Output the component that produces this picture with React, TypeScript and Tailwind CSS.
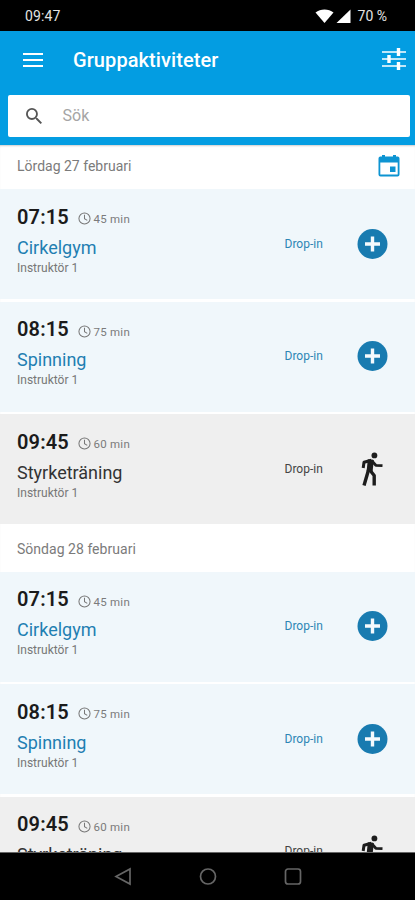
import React from "react";

type Activity = { time: string; length: string; name: string; walk?: boolean };

const activities: Activity[] = [
  { time: "07:15", length: "45 min", name: "Cirkelgym" },
  { time: "08:15", length: "75 min", name: "Spinning" },
  { time: "09:45", length: "60 min", name: "Styrketräning", walk: true },
];

function Plus() {
  return (
    <svg viewBox="0 0 36 36" className="size-9">
      <circle cx="18.5" cy="18" r="15" fill="#187bb0" />
      <path d="M18.5 10.5v15M11 18h15" stroke="#f4fafd" strokeWidth="3.4" />
    </svg>
  );
}

function Walk() {
  return (
    <svg viewBox="0 0 22 34" className="mt-[1.5px] h-[34px] w-[22px]" fill="none" stroke="#1d1d1d" strokeLinejoin="round">
      <circle cx="13.4" cy="3.4" r="2.9" fill="#1d1d1d" stroke="none" />
      <path d="M9.8 7.600L8.600 19.500" strokeWidth="6" />
      <path d="M10.500 8.300L3 10.300L2.200 16" strokeWidth="3" />
      <path d="M10.500 8.500L14.800 13.300L21.500 13.600" strokeWidth="2.800" />
      <path d="M7.800 17L3 33.500" strokeWidth="3.400" />
      <path d="M8.800 18L13.200 23.500V33.500" strokeWidth="3.400" />
    </svg>
  );
}

function Row({ a }: { a: Activity }) {
  return (
    <div className={`flex h-[110.25px] shrink-0 pl-[17px] ${a.walk ? "bg-[#efefef]" : "bg-[#f0f7fb]"}`}>
      <div className="w-[267.5px] pt-[15.75px]">
        <div className="flex h-6 items-center">
          <span className="w-[61px] text-[20px] leading-6 font-semibold tracking-[0.15px] text-[#1b1b1b]">{a.time}</span>
          <svg viewBox="0 0 14 14" className="mt-[4px] size-[13px]" fill="none" stroke="#777" strokeWidth="1.1">
            <circle cx="7" cy="7" r="6" />
            <path d="M7 3v4.2l3 1.8" />
          </svg>
          <span className="mt-[5px] ml-[2.5px] text-[11.5px] leading-4 tracking-[0.25px] text-[#7b7b7b]">{a.length}</span>
        </div>
        <div className={`mt-[6.75px] text-[18px] leading-6 ${a.walk ? "text-[#333]" : "text-[#1f7fb2]"}`}>{a.name}</div>
        <div className="text-[12px] leading-4 text-[#777]">Instruktör 1</div>
      </div>
      <div className={`w-[69.5px] pt-[46.75px] text-[12px] leading-4 ${a.walk ? "text-[#444]" : "text-[#2d86b5]"}`}>Drop-in</div>
      <div className="flex w-9 justify-center pt-[36.75px]">{a.walk ? <Walk /> : <Plus />}</div>
    </div>
  );
}

function Rows() {
  return (
    <div className="flex flex-col gap-[2.25px]">
      {activities.map((a) => (
        <Row key={a.time} a={a} />
      ))}
    </div>
  );
}

export default function App() {
  return (
    <div className="flex h-[900px] w-[415px] flex-col overflow-hidden bg-white font-['Roboto',sans-serif]">
      <div className="flex h-[31px] shrink-0 items-center bg-black pr-[28px] pl-[25px] text-[14px] text-[#e4e4e4]">
        <span className="flex-1 pt-px tracking-[0.15px]">09:47</span>
        <svg viewBox="0 0 36 16" className="mt-px mr-[7px] h-4 w-9" fill="#fff">
          <path d="M0.5 4.5C5.5 0.5 13.500 0.500 18.500 4.500L9.500 15z" />
          <path d="M35.500 1.500V15H21.500z" />
        </svg>
        <span className="pt-px">70 %</span>
      </div>
      <header className="h-[113.500px] shrink-0 bg-[#039de2]">
        <div className="flex h-[64px] items-center pl-[23px]">
          <svg viewBox="0 0 20 14" className="mt-[-6px] h-[14px] w-5" stroke="#fff" strokeWidth="2">
            <path d="M0 1h20M0 7h20M0 13h20" />
          </svg>
          <h1 className="mt-[-6px] ml-[30px] flex-1 text-[20px] font-medium tracking-[0.08px] text-white">Gruppaktiviteter</h1>
          <svg viewBox="0 0 24 24" className="mt-[-8px] mr-[9px] size-6" stroke="#fff">
            <path d="M0 5h24M0 12h24M0 19h24" strokeWidth="1.500" />
            <path d="M16.500 1v8M7 8v8M16.500 15v8" strokeWidth="3.400" />
          </svg>
        </div>
        <div className="mr-[5.500px] ml-[7.500px] flex h-[42px] items-center rounded-[2px] bg-white pl-[18px]">
          <svg viewBox="3 3 17.500 17.500" className="size-4" fill="#555">
            <path d="M15.500 14h-.79l-.28-.27A6.471 6.471 0 0 0 16 9.500 6.500 6.500 0 1 0 9.500 16c1.610 0 3.090-.59 4.230-1.570l.27.28v.79l5 4.990L20.490 19l-4.990-5zm-6 0C7.010 14 5 11.990 5 9.500S7.010 5 9.500 5 14 7.010 14 9.500 11.990 14 9.500 14z" />
          </svg>
          <span className="ml-[21px] text-[16px] text-[#a5a5a5]">Sök</span>
        </div>
      </header>
      <main className="min-h-0 flex-1 overflow-hidden shadow-[inset_0_2px_2px_-1px_#0003]">
        <div className="flex h-[44.500px] items-center pr-[15px] pl-[17px] text-[14px] text-[#7b7b7b]">
          <span className="flex-1">Lördag 27 februari</span>
          <svg viewBox="0 0 22 22" className="mt-[-1px] size-[22px]" fill="#0d94d2">
            <path fillRule="evenodd" d="M2 1.500h2V0h3v1.500h8V0h3v1.500h2a2 2 0 0 1 1.500 2V19.500a2 2 0 0 1-2 2H2.500a2 2 0 0 1-2-2V3.500a2 2 0 0 1 1.500-2zM2.300 7.500v12h17.400v-12z" />
            <path d="M12 11.500h5.500V17H12z" />
          </svg>
        </div>
        <Rows />
        <div className="flex h-[47.250px] items-center pt-[3px] pl-[17px] text-[14px] tracking-[0.03px] text-[#7b7b7b]">Söndag 28 februari</div>
        <Rows />
      </main>
      <nav className="flex h-12 shrink-0 justify-center border-t border-[#666] bg-black">
        <svg viewBox="0 0 188 20" className="mt-[14px] h-5 w-[188px]" fill="none" stroke="#666" strokeWidth="1.700">
          <path d="M2 9.500L16 2v15z" />
          <circle cx="94" cy="9.500" r="7.500" />
          <rect x="171.500" y="2" width="15" height="15" rx="2.500" />
        </svg>
      </nav>
    </div>
  );
}
